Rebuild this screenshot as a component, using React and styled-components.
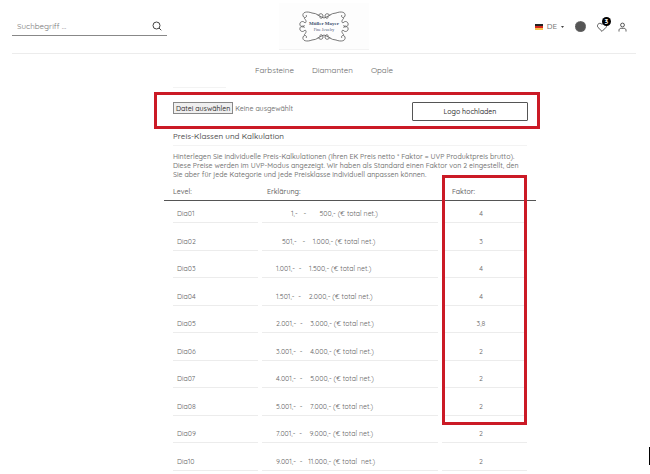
import React from 'react'
import styled, { createGlobalStyle, ThemeProvider } from 'styled-components'

const theme = {
  text: '#777',
  dark: '#444',
  line: '#ececec',
  red: '#cb1a26'
}

const GlobalStyle = createGlobalStyle`
  * {
    box-sizing: border-box;
  }

  body {
    margin: 0;
    background: white;
    color: ${props => props.theme.text};
    font: 500 7px/9px Quicksand, Lato, sans-serif;
  }

  button,
  input {
    font: inherit;
    color: inherit;
  }
`

const Header = styled.header`
  display: grid;
  grid-template-columns: 1fr auto 1fr;
  align-items: center;
  height: 54px;
  margin: 0 14px 0 12px;
  border-bottom: 1px solid ${props => props.theme.line};
`

const Search = styled.form`
  display: flex;
  align-items: center;
  width: 155px;
  height: 18px;
  padding: 0 5px;
  border-bottom: 1px solid #888;
`

const SearchInput = styled.input`
  flex: 1;
  min-width: 0;
  padding: 0;
  border: 0;
  outline: 0;
  background: none;
  font-size: 8px;
  font-weight: 400;

  &::placeholder {
    color: #777;
    opacity: 1;
  }
`

const IconButton = styled.button`
  position: relative;
  display: flex;
  padding: 0;
  border: 0;
  background: none;
  color: ${props => props.theme.dark};
`

const LogoLink = styled.a`
  display: block;
  height: 47px;
  padding: 0 1px;
  border-bottom: 1px solid #f3f3f3;
  background: #fdfdfd;
`

const Tools = styled.div`
  display: flex;
  justify-content: flex-end;
  align-items: center;
  gap: 11px;
  padding-right: 9px;
`

const Language = styled.button`
  display: flex;
  align-items: center;
  gap: 4px;
  padding: 0;
  border: 0;
  background: none;
  font-size: 8px;
`

const Dot = styled.button`
  width: 11px;
  height: 11px;
  padding: 0;
  border: 1px dotted #777;
  border-radius: 50%;
  background: #555;
`

const Badge = styled.span`
  position: absolute;
  top: -5px;
  right: -4px;
  width: 9px;
  height: 9px;
  border-radius: 50%;
  background: black;
  color: white;
  font-size: 7px;
  font-weight: bold;
  text-align: center;
`

const Nav = styled.nav`
  display: flex;
  justify-content: center;
  gap: 18px;
  height: 33px;
  padding: 11px 2px 0 0;
`

const NavLink = styled.a`
  color: #666;
  font-size: 8px;
  font-weight: 400;
  line-height: 10px;
  text-decoration: none;
`

const Main = styled.main`
  padding: 0 110px 0 154px;
`

const ShortRule = styled.div`
  width: 53px;
  margin: 0 0 4px 19px;
  border-top: 1px solid #f3f3f3;
`

const Upload = styled.form`
  display: flex;
  justify-content: space-between;
  align-items: flex-start;
  height: 37px;
  padding: 7px 9px 0 16px;
  border: 3px solid ${props => props.theme.red};
`

const FileField = styled.div`
  display: flex;
  align-items: center;
  gap: 2px;
`

const FileButton = styled.button`
  height: 12px;
  padding: 0 2px;
  border: 1px solid #888;
  background: #efefef;
  color: #333;
  line-height: 9px;
`

const UploadButton = styled.button`
  width: 116px;
  height: 19px;
  border: 1px solid #555;
  border-radius: 1px;
  background: white;
  color: #333;
`

const Intro = styled.section`
  padding: 0 13px 0 19px;
`

const Title = styled.h1`
  margin: 0 0 6px;
  padding: 2px 0 4px;
  border-bottom: 1px solid #f3f3f3;
  color: #555;
  font-size: 8px;
  font-weight: 500;
  line-height: 10px;
`

const Description = styled.p`
  margin: 0;
`

const TableArea = styled.div`
  position: relative;
  margin: 3px 4px 0 10px;
`

const Table = styled.table`
  display: block;
`

const Head = styled.thead`
  display: block;
`

const Body = styled.tbody`
  display: block;
`

const Row = styled.tr`
  display: grid;
  grid-template-columns: 85fr 176fr 85fr;
  column-gap: 4px;
  height: 28px;
  padding: 0 9px;

  &:nth-child(odd) {
    height: 27px;
  }

  &:first-child {
    height: 22px;
  }
`

const HeadRow = styled(Row)`
  &:first-child {
    height: 19px;
  }
  border-bottom: 1px solid #555;
`

const HeadCell = styled.th`
  padding: 5px 0 0 ${props => props.$indent || 0}px;
  font-weight: 500;
  text-align: left;
  color: #666;
`

const Cell = styled.td`
  display: flex;
  justify-content: ${props => (props.$center ? 'center' : 'flex-start')};
  align-items: flex-end;
  padding: 0 ${props => (props.$center ? 7 : 0)}px 4px
    ${props => props.$indent || 0}px;
  border-bottom: 1px solid ${props => props.theme.line};
  color: #666;
  font-weight: 400;
  white-space: pre;
`

const Highlight = styled.div`
  position: absolute;
  inset: -7px 0 46px;
  display: grid;
  grid-template-columns: 85fr 176fr 85fr;
  column-gap: 4px;
  padding: 0 9px;
  pointer-events: none;

  &::after {
    content: '';
    grid-column: 3;
    border: 3px solid ${props => props.theme.red};
  }
`

const Caret = styled.div`
  position: fixed;
  right: 0;
  bottom: 9px;
  width: 1px;
  height: 18px;
  background: black;
`

const LEVELS = [
  { level: 'Dia01', indent: 29, range: '1,-   -       500,- (€ total net.)', factor: '4' },
  { level: 'Dia02', indent: 20, range: '501,-   -    1.000,- (€ total net.)', factor: '3' },
  { level: 'Dia03', indent: 14, range: '1.001,-  -    1.500,- (€ total net.)', factor: '4' },
  { level: 'Dia04', indent: 14, range: '1.501,-  -    2.000,- (€ total net.)', factor: '4' },
  { level: 'Dia05', indent: 14, range: '2.001,-  -    3.000,- (€ total net.)', factor: '3,8' },
  { level: 'Dia06', indent: 14, range: '3.001,-  -    4.000,- (€ total net.)', factor: '2' },
  { level: 'Dia07', indent: 14, range: '4.001,-  -    5.000,- (€ total net.)', factor: '2' },
  { level: 'Dia08', indent: 14, range: '5.001,-  -    7.000,- (€ total net.)', factor: '2' },
  { level: 'Dia09', indent: 14, range: '7.001,-  -    9.000,- (€ total net.)', factor: '2' },
  { level: 'Dia10', indent: 14, range: '9.001,-  -   11.000,- (€ total  net.)', factor: '2' }
]

// one corner of the scrollwork, mirrored for the other three
const CORNER =
  'M44 15 C40 14 37 10 32 10 C27 8 22 9 23 13 C24 16 28 14 26 12 M24 15 C26 17 27 19 25 20 M25 20 C23 17 19 19 20 22 C21 25 25 24 24 22 M38 13 C39 10 43 10 43 13 C43 16 39 16 40 13'

const Logo = () => (
  <svg width="88" height="46" viewBox="0 0 88 46" role="img" aria-label="Müller Mayer">
    <g fill="none" stroke="#555" strokeWidth="0.8">
      <path d={CORNER} />
      <path d={CORNER} transform="matrix(-1 0 0 1 88 0)" />
      <path d={CORNER} transform="matrix(1 0 0 -1 0 47)" />
      <path d={CORNER} transform="matrix(-1 0 0 -1 88 47)" />
    </g>
    <g fill="#435270" fontFamily="Liberation Serif, serif" textAnchor="middle">
      <text x="44" y="22" fontSize="5" fontWeight="bold">Müller Mayer</text>
      <text x="44" y="28" fontSize="4">Fine Jewelry</text>
    </g>
  </svg>
)

const SearchIcon = () => (
  <svg width="10" height="10" viewBox="0 0 10 10" fill="none" stroke="currentColor">
    <circle cx="4.5" cy="4.5" r="3.5" />
    <path d="M7 7 L9.3 9.3" />
  </svg>
)

const FlagIcon = () => (
  <svg width="8" height="6" viewBox="0 0 8 6">
    <path fill="#222" d="M0 0h8v2H0z" />
    <path fill="#d5281e" d="M0 2h8v2H0z" />
    <path fill="#f8c24c" d="M0 4h8v2H0z" />
  </svg>
)

const HeartIcon = () => (
  <svg width="10" height="10" viewBox="0 0 10 10" fill="none" stroke="currentColor" strokeWidth="0.9">
    <path d="M5 9.4 L0.9 5.3 C-0.8 3 2.4 -0.4 5 2.4 C7.6 -0.4 10.8 3 9.1 5.3 Z" />
  </svg>
)

const UserIcon = () => (
  <svg width="9" height="10" viewBox="0 0 9 10" fill="none" stroke="currentColor" strokeWidth="0.9">
    <circle cx="4.5" cy="3" r="1.9" />
    <path d="M1 9.5 V8.4 C1 7 2 6.3 3.2 6.3 H5.8 C7 6.3 8 7 8 8.4 V9.5" />
  </svg>
)

const App = () => (
  <ThemeProvider theme={theme}>
    <GlobalStyle />
    <Header>
      <Search>
        <SearchInput type="search" placeholder="Suchbegriff ..." aria-label="Suchbegriff" />
        <IconButton type="button" aria-label="Suchen">
          <SearchIcon />
        </IconButton>
      </Search>
      <LogoLink href="#">
        <Logo />
      </LogoLink>
      <Tools>
        <Language type="button">
          <FlagIcon />
          DE
          <svg width="3" height="2" viewBox="0 0 3 2">
            <path fill="#444" d="M0 0h3L1.5 2z" />
          </svg>
        </Language>
        <Dot type="button" aria-label="Modus" />
        <IconButton type="button" aria-label="Merkliste">
          <HeartIcon />
          <Badge>3</Badge>
        </IconButton>
        <IconButton type="button" aria-label="Konto">
          <UserIcon />
        </IconButton>
      </Tools>
    </Header>
    <Nav>
      <NavLink href="#">Farbsteine</NavLink>
      <NavLink href="#">Diamanten</NavLink>
      <NavLink href="#">Opale</NavLink>
    </Nav>
    <Main>
      <ShortRule />
      <Upload>
        <FileField>
          <FileButton type="button">Datei auswählen</FileButton>
          <span>Keine ausgewählt</span>
        </FileField>
        <UploadButton type="button">Logo hochladen</UploadButton>
      </Upload>
      <Intro>
        <Title>Preis-Klassen und Kalkulation</Title>
        <Description>
          Hinterlegen Sie individuelle Preis-Kalkulationen (Ihren EK Preis netto * Faktor = UVP Produktpreis brutto).
          <br />
          Diese Preise werden im UVP-Modus angezeigt. Wir haben als Standard einen Faktor von 2 eingestellt, den
          <br />
          Sie aber für jede Kategorie und jede Preisklasse individuell anpassen können.
        </Description>
      </Intro>
      <TableArea>
        <Table>
          <Head>
            <HeadRow>
              <HeadCell scope="col">Level:</HeadCell>
              <HeadCell scope="col" $indent={5}>Erklärung:</HeadCell>
              <HeadCell scope="col" $indent={10}>Faktor:</HeadCell>
            </HeadRow>
          </Head>
          <Body>
            {LEVELS.map(item => (
              <Row key={item.level}>
                <Cell $indent={4}>{item.level}</Cell>
                <Cell $indent={item.indent}>{item.range}</Cell>
                <Cell $center>{item.factor}</Cell>
              </Row>
            ))}
          </Body>
        </Table>
        <Highlight />
      </TableArea>
    </Main>
    <Caret />
  </ThemeProvider>
)

export default App
